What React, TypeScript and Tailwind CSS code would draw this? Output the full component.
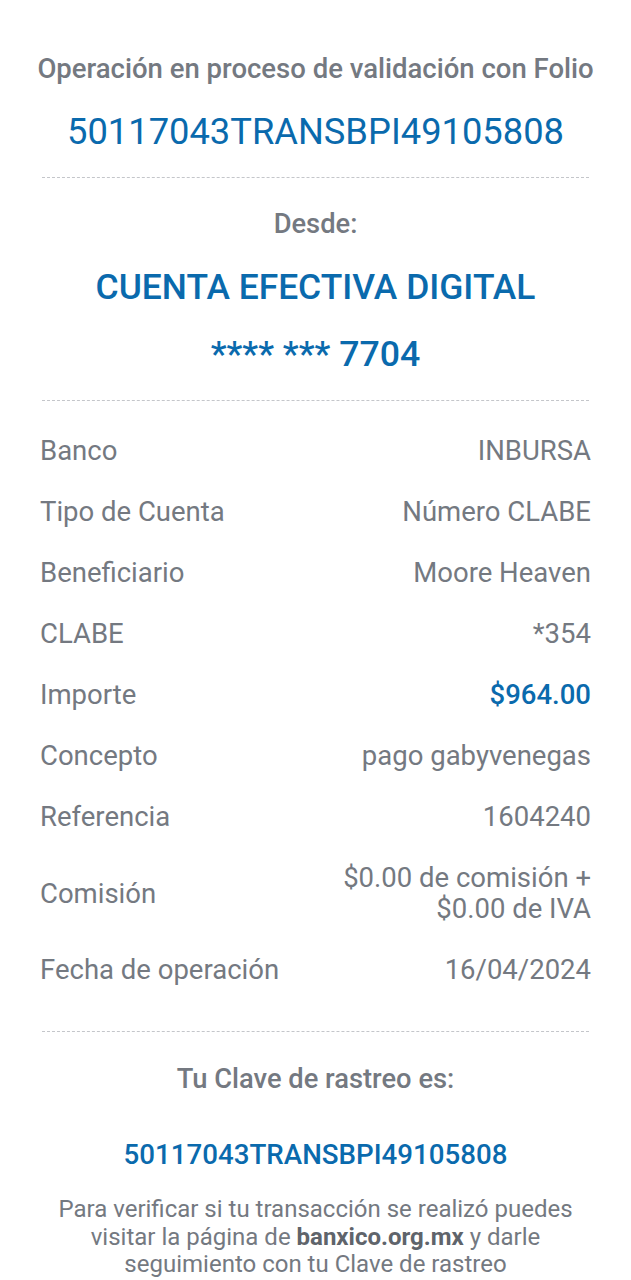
const rows: { label: string; value: React.ReactNode; blue?: boolean }[] = [
  { label: "Banco", value: "INBURSA" },
  { label: "Tipo de Cuenta", value: "Número CLABE" },
  { label: "Beneficiario", value: "Moore Heaven" },
  { label: "CLABE", value: "*354" },
  { label: "Importe", value: "$964.00", blue: true },
  { label: "Concepto", value: "pago gabyvenegas" },
  { label: "Referencia", value: "1604240" },
  {
    label: "Comisión",
    value: (
      <>
        $0.00 de comisión +
        <br />
        $0.00 de IVA
      </>
    ),
  },
  { label: "Fecha de operación", value: "16/04/2024" },
];

function Divider() {
  return <div className="mx-[42px] border-t border-dashed border-[#c4c6ca]" />;
}

export default function App() {
  return (
    <div className="min-h-[1280px] w-full bg-white font-['Roboto',sans-serif] text-[#747981]">
      <div className="pt-[52px] text-center">
        <h1 className="text-[27.5px] font-medium leading-[34px] whitespace-nowrap">Operación en proceso de validación con Folio</h1>
        <p className="mt-[26px] text-[36.3px] leading-[40px] text-[#0a6aad]">50117043TRANSBPI49105808</p>
      </div>

      <div className="mt-[25px]">
        <Divider />
      </div>

      <div className="pt-[29px] text-center">
        <p className="text-[27.3px] font-medium leading-[34px]">Desde:</p>
        <p className="mt-[26px] text-[35.4px] font-medium leading-[40px] text-[#0a6aad]">CUENTA EFECTIVA DIGITAL</p>
        <p className="mt-[27px] text-[35.7px] font-medium leading-[40px] text-[#0a6aad]">**** *** 7704</p>
      </div>

      <div className="mt-[26px]">
        <Divider />
      </div>

      <div className="flex flex-col gap-[30px] px-[40px] pt-[34px] text-[27.5px] leading-[31px]">
        {rows.map((r) => (
          <div key={r.label} className="flex items-center justify-between">
            <span>{r.label}</span>
            <span className={r.blue ? "text-right font-medium text-[#0a6aad]" : "text-right"}>{r.value}</span>
          </div>
        ))}
      </div>

      <div className="mt-[46px]">
        <Divider />
      </div>

      <div className="pt-[30px] text-center">
        <p className="text-[27.3px] font-medium leading-[34px]">Tu Clave de rastreo es:</p>
        <p className="mt-[42px] text-[27.7px] font-medium leading-[34px] text-[#0a6aad]">50117043TRANSBPI49105808</p>
        <p className="mt-[24px] text-[24px] leading-[27.5px]">
          Para verificar si tu transacción se realizó puedes
          <br />
          visitar la página de <span className="font-bold text-[#5f646b]">banxico.org.mx</span> y darle
          <br />
          seguimiento con tu Clave de rastreo
        </p>
      </div>
    </div>
  );
}
